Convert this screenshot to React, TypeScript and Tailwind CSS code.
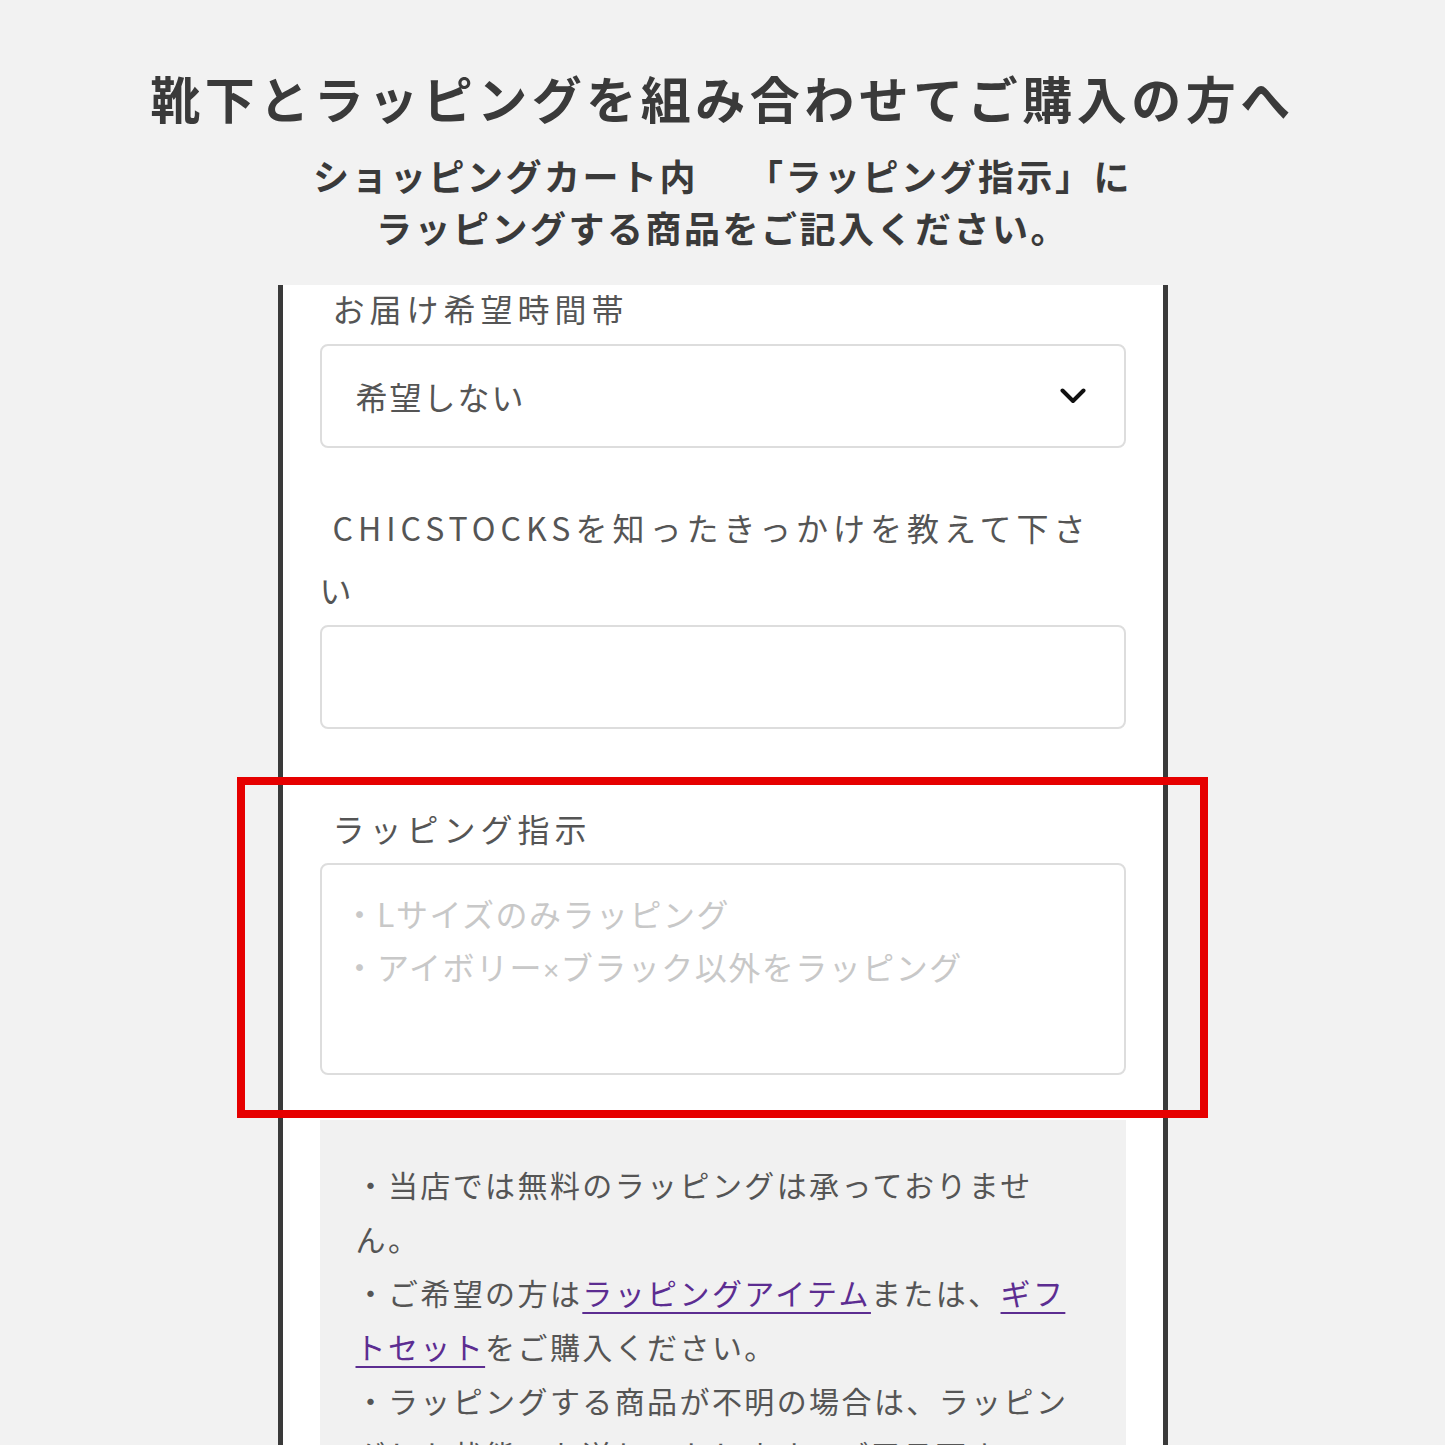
import React from "react";

const jp = "font-['Noto_Sans_CJK_JP','Noto_Sans',sans-serif]";

function Label({ children }: { children: React.ReactNode }) {
  return (
    <div className="indent-[13px] text-[32px] leading-[46px] tracking-[5px] text-[#555555]">
      {children}
    </div>
  );
}

function Chevron() {
  return (
    <svg width="26" height="16" viewBox="0 0 26 16" fill="none">
      <polyline
        points="2.5,2.5 13,13 23.5,2.5"
        stroke="#111111"
        strokeWidth="4"
        strokeLinecap="round"
        strokeLinejoin="round"
      />
    </svg>
  );
}

function App() {
  return (
    <div className={`relative h-[1445px] overflow-hidden bg-[#f2f2f2] ${jp}`}>
      {/* heading */}
      <div className="pt-[67px] text-center">
        <h1 className="text-[50px] font-bold leading-[60px] tracking-[4.5px] text-[#3a3a3a]">
          靴下とラッピングを組み合わせてご購入の方へ
        </h1>
        <p className="mt-[22px] text-[36px] font-bold leading-[52px] tracking-[2.5px] text-[#3a3a3a]">
          ショッピングカート内　 「ラッピング指示」に
          <br />
          ラッピングする商品をご記入ください。
        </p>
      </div>

      {/* phone screen */}
      <div className="mx-auto mt-[32px] w-[890px] border-x-[5px] border-[#3a3a3a] bg-white px-[37px] pb-[40px]">
        <Label>お届け希望時間帯</Label>
        <div className="mt-[13px] flex h-[104px] items-center justify-between rounded-[8px] border-2 border-[#dddddd] pl-[34px] pr-[38px]">
          <span className="text-[32px] tracking-[2px] text-[#555555]">希望しない</span>
          <Chevron />
        </div>

        <div className="mt-[48px] indent-[13px] text-[32px] leading-[62px] tracking-[5px] text-[#555555]">
          CHICSTOCKSを知ったきっかけを教えて下さ
          <br />
          い
        </div>
        <div className="mt-[5px] h-[104px] rounded-[8px] border-2 border-[#dddddd]" />

        <div className="mt-[76px]">
          <Label>ラッピング指示</Label>
        </div>
        <div className="mt-[12px] h-[212px] rounded-[8px] border-2 border-[#dddddd] pl-[22px] pt-[22px] text-[32px] leading-[53px] tracking-[1.5px] text-[#c8c8c8]">
          <div>・Lサイズのみラッピング</div>
          <div>
            ・アイボリー
            <span className="font-['Liberation_Sans',sans-serif] text-[28px]">×</span>
            ブラック以外をラッピング
          </div>
        </div>

        <div className="mt-[45px] bg-[#f1f1f1] pl-[36px] pr-[30px] pt-[37px] pb-[40px] text-[30px] leading-[54px] tracking-[2.4px] text-[#555555]">
          ・当店では無料のラッピングは承っておりませ
          <br />
          ん。
          <br />
          ・ご希望の方は
          <a className="text-[#5c2d91] underline decoration-2 underline-offset-[7px]">
            ラッピングアイテム
          </a>
          または、
          <a className="text-[#5c2d91] underline decoration-2 underline-offset-[7px]">
            ギフ
            <br />
            トセット
          </a>
          をご購入ください。
          <br />
          ・ラッピングする商品が不明の場合は、ラッピン
          <br />
          グした状態でお送りいたします。ご了承下さい。
        </div>
      </div>

      {/* highlight frame */}
      <div className="absolute left-[237px] top-[777px] h-[341px] w-[971px] border-[8px] border-[#e60000]" />
    </div>
  );
}

export default App;
